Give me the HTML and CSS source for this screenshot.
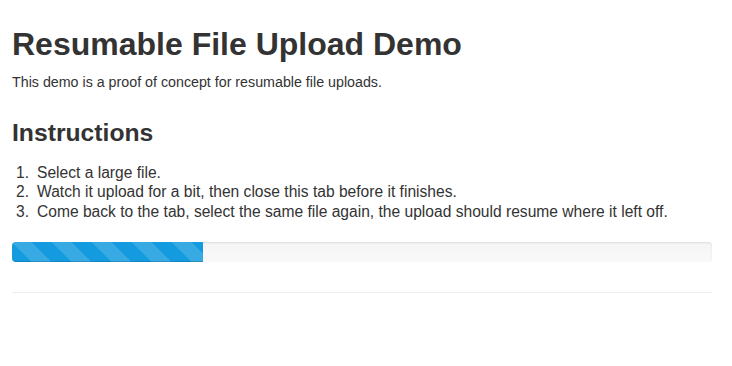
FILE: index.html
```html
<!DOCTYPE html>
<html>
<head>
<meta charset="utf-8">
<title>Resumable File Upload Demo</title>
<link rel="stylesheet" href="styles.css">
</head>
<body>
<div class="container">
  <h1 class="title">Resumable File Upload Demo</h1>
  <p class="lead-text">This demo is a proof of concept for resumable file uploads.</p>
  <h2 class="subtitle">Instructions</h2>
  <ol class="steps">
    <li>Select a large file.</li>
    <li>Watch it upload for a bit, then close this tab before it finishes.</li>
    <li>Come back to the tab, select the same file again, the upload should resume where it left off.</li>
  </ol>
  <div class="progress">
    <div class="bar" style="width: 27.3%"></div>
  </div>
  <hr class="divider">
</div>
</body>
</html>
```
FILE: styles.css
```css
html, body {
  margin: 0;
  padding: 0;
  background: #ffffff;
}
body {
  font-family: "Liberation Sans", Arial, Helvetica, sans-serif;
  font-size: 14px;
  line-height: 20px;
  color: #333333;
}
.container {
  width: 700px;
  padding: 0 12px;
}
.title {
  font-size: 32px;
  line-height: 40px;
  font-weight: bold;
  margin: 24px 0 8px;
}
.lead-text {
  font-size: 14.25px;
  margin: 0 0 26px;
}
.subtitle {
  font-size: 24.7px;
  line-height: 30px;
  font-weight: bold;
  margin: 0 0 15px;
}
.steps {
  margin: 0 0 21px;
  padding: 0 0 0 4px;
  list-style: none;
  counter-reset: step;
  font-size: 15.6px;
}
.steps li {
  display: flex;
  line-height: 19.3px;
  counter-increment: step;
}
.steps li::before {
  content: counter(step) ".";
  flex: 0 0 21px;
}
.progress {
  height: 20px;
  border-radius: 4px;
  background: linear-gradient(to bottom, #f5f5f5, #f9f9f9);
  box-shadow: inset 0 1px 2px rgba(0, 0, 0, 0.1);
  overflow: hidden;
}
.bar {
  height: 100%;
  background-color: #149bdf;
  background-image: linear-gradient(45deg, rgba(255,255,255,0.15) 25%, transparent 25%, transparent 50%, rgba(255,255,255,0.15) 50%, rgba(255,255,255,0.15) 75%, transparent 75%, transparent);
  background-size: 40px 40px;
  box-shadow: inset 0 -1px 0 rgba(0,0,0,0.15);
}
.divider {
  margin: 30px 0 0;
  border: 0;
  border-top: 1px solid #eeeeee;
  height: 0;
}
```
